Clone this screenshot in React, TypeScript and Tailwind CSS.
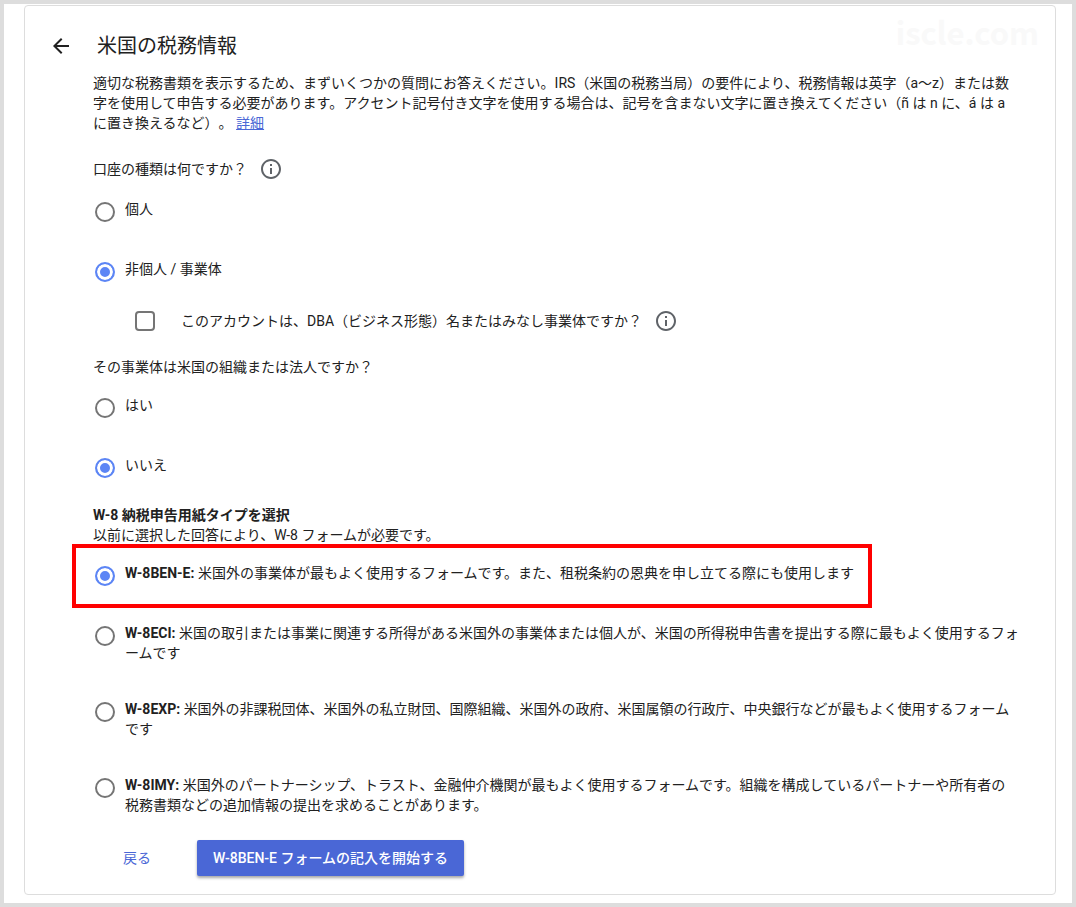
import { useState } from 'react';

interface RadioRowProps {
  name: string;
  value: string;
  selected: string;
  onSelect: (value: string) => void;
  highlighted?: boolean;
  children: React.ReactNode;
}

const formTypes = [
  {
    id: 'W-8BEN-E',
    text: '米国外の事業体が最もよく使用するフォームです。また、租税条約の恩典を申し立てる際にも使用します'
  },
  {
    id: 'W-8ECI',
    text: '米国の取引または事業に関連する所得がある米国外の事業体または個人が、米国の所得税申告書を提出する際に最もよく使用するフォームです'
  },
  {
    id: 'W-8EXP',
    text: '米国外の非課税団体、米国外の私立財団、国際組織、米国外の政府、米国属領の行政庁、中央銀行などが最もよく使用するフォームです'
  },
  {
    id: 'W-8IMY',
    text: '米国外のパートナーシップ、トラスト、金融仲介機関が最もよく使用するフォームです。組織を構成しているパートナーや所有者の税務書類などの追加情報の提出を求めることがあります。'
  }
];

const InfoButton = () => (
  <button type="button" aria-label="ヘルプ" className="h-6 w-6 shrink-0 text-[#5f6368]">
    <svg viewBox="0 0 24 24" fill="currentColor" className="h-6 w-6">
      <path d="M11 7h2v2h-2V7zm0 4h2v6h-2v-6zm1-9C6.48 2 2 6.48 2 12s4.48 10 10 10 10-4.48 10-10S17.52 2 12 2zm0 18c-4.41 0-8-3.59-8-8s3.59-8 8-8 8 3.59 8 8-3.59 8-8 8z" />
    </svg>
  </button>
);

const RadioRow = ({ name, value, selected, onSelect, highlighted, children }: RadioRowProps) => (
  <div className="relative w-fit pb-9">
    {highlighted && (
      <div className="pointer-events-none absolute -top-[19px] -right-[18px] bottom-[15px] -left-[21px] border-4 border-[#ff0000]" />
    )}
    <label className="flex min-h-6 cursor-pointer items-start gap-2.5 pl-0.5">
      <input
        type="radio"
        name={name}
        value={value}
        checked={selected === value}
        onChange={() => onSelect(value)}
        className="mt-[3px] h-5 w-5 shrink-0 appearance-none rounded-full border-2 border-[#757575] bg-white checked:border-[#5c85f5] checked:bg-[#5c85f5] checked:shadow-[inset_0_0_0_3px_white]"
      />
      <span>{children}</span>
    </label>
  </div>
);

const App = () => {
  const [accountType, setAccountType] = useState('business');
  const [isDba, setIsDba] = useState(false);
  const [isUsEntity, setIsUsEntity] = useState('no');
  const [formType, setFormType] = useState('W-8BEN-E');

  return (
    <div
      lang="ja"
      className="min-h-screen border-4 border-[#dddddd] bg-white pt-px pr-4 pb-2 pl-5 font-[Roboto,'Noto_Sans_CJK_JP',sans-serif] text-sm leading-5 text-[#212121] [text-spacing-trim:space-all]"
    >
      <main className="rounded border border-[#dddddd] pb-[18px]">
        <header className="flex h-[67px] items-center pt-3 pr-4 pl-6">
          <button type="button" aria-label="前のページ" className="h-6 w-6">
            <svg viewBox="0 0 24 24" fill="currentColor" className="h-6 w-6">
              <path d="M20 11H7.83l5.59-5.59L12 4l-8 8 8 8 1.41-1.41L7.83 13H20v-2z" />
            </svg>
          </button>
          <h1 className="ml-6 text-xl">米国の税務情報</h1>
          <span className="ml-auto pb-7 font-['Noto_Sans_CJK_JP',sans-serif] text-[31px] leading-8 font-bold text-[#f9f9f9]">
            iscle.com
          </span>
        </header>

        <form className="pr-9 pl-17" onSubmit={(e) => e.preventDefault()}>
          <p>
            適切な税務書類を表示するため、まずいくつかの質問にお答えください。IRS（米国の税務当局）の要件により、税務情報は英字（a～z）または数字を使用して申告する必要があります。アクセント記号付き文字を使用する場合は、記号を含まない文字に置き換えてください（ñ は n に、á は a に置き換えるなど）。{' '}
            <a href="#details" className="text-[#4a67d6] underline">
              詳細
            </a>
          </p>

          {/* Account type */}
          <fieldset className="mt-6">
            <legend className="flex items-center gap-3">
              口座の種類は何ですか？
              <InfoButton />
            </legend>
            <div className="pt-[18px]">
              <RadioRow name="account" value="individual" selected={accountType} onSelect={setAccountType}>
                個人
              </RadioRow>
              <RadioRow name="account" value="business" selected={accountType} onSelect={setAccountType}>
                非個人 / 事業体
              </RadioRow>
            </div>
            <div className="-mt-2.5 flex items-center pl-[42px]">
              <input
                id="dba"
                type="checkbox"
                checked={isDba}
                onChange={(e) => setIsDba(e.target.checked)}
                className="h-5 w-5 shrink-0 appearance-none rounded-sm border-2 border-[#757575] checked:bg-[#5c85f5]"
              />
              <label htmlFor="dba" className="mr-3 ml-[26px]">
                このアカウントは、DBA（ビジネス形態）名またはみなし事業体ですか？
              </label>
              <InfoButton />
            </div>
          </fieldset>

          {/* US entity */}
          <fieldset className="mt-6">
            <legend>その事業体は米国の組織または法人ですか？</legend>
            <div className="pt-[18px]">
              <RadioRow name="entity" value="yes" selected={isUsEntity} onSelect={setIsUsEntity}>
                はい
              </RadioRow>
              <RadioRow name="entity" value="no" selected={isUsEntity} onSelect={setIsUsEntity}>
                いいえ
              </RadioRow>
            </div>
          </fieldset>

          {/* Form type */}
          <fieldset className="-mt-2.5">
            <legend className="font-bold">W-8 納税申告用紙タイプを選択</legend>
            <p>以前に選択した回答により、W-8 フォームが必要です。</p>
            <div className="pt-[18px]">
              {formTypes.map((form) => (
                <RadioRow
                  key={form.id}
                  name="form"
                  value={form.id}
                  selected={formType}
                  onSelect={setFormType}
                  highlighted={form.id === 'W-8BEN-E'}
                >
                  <b>{form.id}:</b> {form.text}
                </RadioRow>
              ))}
            </div>
          </fieldset>

          <div className="-mt-[11px] flex items-center gap-[30px] pl-3.5">
            <button type="button" className="h-9 px-4 text-[#4a67d6]">
              戻る
            </button>
            <button
              type="submit"
              className="h-9 rounded-xs bg-[#4a67d6] px-4 font-medium text-white shadow-[0_2px_3px_rgba(0,0,0,0.35)]"
            >
              {formType} フォームの記入を開始する
            </button>
          </div>
        </form>
      </main>
    </div>
  );
};

export default App;
